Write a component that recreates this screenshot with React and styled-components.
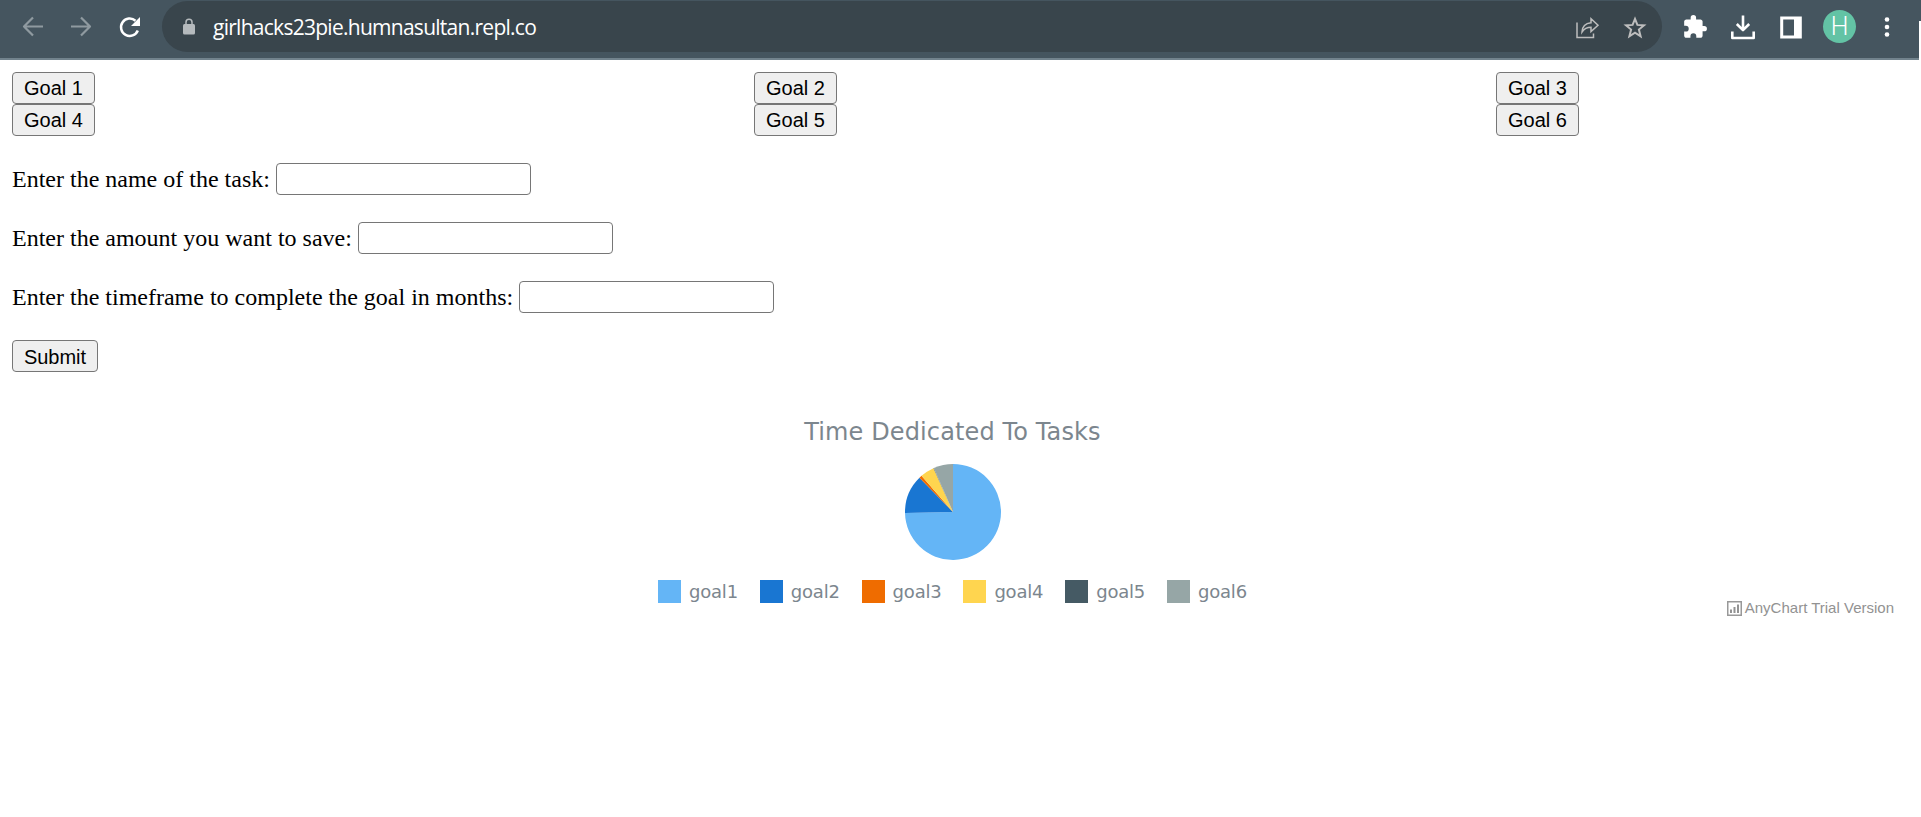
import React from 'react';
import styled, { createGlobalStyle } from 'styled-components';

const GlobalStyle = createGlobalStyle`
  *, *::before, *::after { box-sizing: border-box; }
  html, body { margin: 0; background: #fff; }
  body { overflow: hidden; font-family: "Liberation Serif", serif; color: #000; }
`;

const Page = styled.div`
  width: 1921px;
  height: 817px;
  overflow: hidden;
  background: #fff;
`;

const TopRow = styled.div`
  display: flex;
  height: 60px;
`;

const Toolbar = styled.header`
  display: flex;
  align-items: flex-start;
  width: 1919px;
  height: 60px;
  background: #45555f;
  border-bottom: 2px solid #72838d;
`;

const WindowEdge = styled.div`
  width: 2px;
  height: 21px;
  background: #45555f;
`;

const NavGroup = styled.nav`
  display: flex;
  width: 162px;
  height: 53px;
  padding-left: 20px;
  align-items: center;
  gap: 22px;
`;

const IconButton = styled.button`
  display: grid;
  place-items: center;
  width: 26px;
  height: 26px;
  padding: 0;
  border: 0;
  background: none;
  color: ${({ $color }) => $color || '#fff'};
  svg { display: block; }
`;

const AddressBar = styled.div`
  display: flex;
  align-items: center;
  width: 1500px;
  height: 51px;
  margin-top: 1px;
  padding: 0 14px 0 21px;
  border-radius: 26px;
  background: #39454c;
`;

const Url = styled.span`
  flex: 1;
  padding-left: 18px;
  font: 21px/30px "Open Sans", sans-serif;
  letter-spacing: -0.73px;
  color: #fff;
`;

const AddressActions = styled.div`
  display: flex;
  gap: 22px;
`;

const Extensions = styled.div`
  display: flex;
  align-items: center;
  height: 53px;
  padding-left: 20px;
  gap: 22px;
`;

const Avatar = styled.span`
  display: grid;
  place-items: center;
  width: 33px;
  height: 33px;
  margin: 0 -4px 0 -3px;
  border-radius: 50%;
  background: #63c3a5;
  color: #fff;
  font: 300 25px/33px Roboto, sans-serif;
`;

const Content = styled.main`
  padding: 12px;
`;

const GoalGrid = styled.div`
  display: grid;
  grid-template-columns: repeat(3, 742px);
  justify-items: start;
`;

const Button = styled.button`
  width: ${({ $width }) => $width}px;
  height: 32px;
  padding: 0;
  border: 1px solid #767676;
  border-radius: 4px;
  background: #efefef;
  color: #000;
  font: 20px/28px "Liberation Sans", Arial, sans-serif;
`;

const SubmitButton = styled(Button)`
  padding-top: 1px;
`;

const Form = styled.form`
  display: flex;
  flex-direction: column;
  align-items: flex-start;
  gap: 27px;
  margin-top: 27px;
`;

const Field = styled.label`
  display: flex;
  align-items: center;
  height: 32px;
  gap: 6px;
  font-size: 24px;
  line-height: 32px;
  white-space: nowrap;
`;

const Input = styled.input`
  width: 255px;
  height: 32px;
  border: 1px solid #767676;
  border-radius: 4px;
  background: #fff;
`;

const Chart = styled.section`
  display: flex;
  flex-direction: column;
  align-items: center;
  width: 1881px;
  margin-top: 45px;
  font-family: "DejaVu Sans", sans-serif;
  color: #7c868e;
`;

const ChartTitle = styled.h2`
  margin: 0;
  font-size: 24px;
  font-weight: 400;
  line-height: 30px;
  letter-spacing: 0.12px;
`;

const Pie = styled.svg`
  width: 96px;
  height: 96px;
  margin-top: 17px;
`;

const Legend = styled.ul`
  display: flex;
  gap: 21.8px;
  margin: 20px 0 0;
  padding: 0;
  list-style: none;
`;

const LegendItem = styled.li`
  display: flex;
  align-items: center;
  gap: 8px;
  width: 80px;
  font-size: 18px;
  line-height: 23px;
  letter-spacing: -0.2px;
  white-space: nowrap;
`;

const Swatch = styled.span`
  flex: none;
  width: 23px;
  height: 23px;
  background: ${({ $color }) => $color};
`;

const Credit = styled.footer`
  display: flex;
  align-items: center;
  align-self: flex-end;
  gap: 3px;
  height: 18px;
  margin: -4px -1px 0 0;
  font: 15px/18px "Liberation Sans", Arial, sans-serif;
  color: #929292;
  white-space: nowrap;
`;

const SLICES = [
  { name: 'goal1', color: '#64b5f6', from: 0, to: 268.8 },
  { name: 'goal2', color: '#1976d2', from: 268.8, to: 315.7 },
  { name: 'goal3', color: '#ef6c00', from: 315.7, to: 319 },
  { name: 'goal4', color: '#ffd54f', from: 319, to: 336 },
  { name: 'goal5', color: '#455a64', from: 336, to: 336.5 },
  { name: 'goal6', color: '#96a6a6', from: 336.5, to: 360 },
];

const FIELDS = [
  'Enter the name of the task:',
  'Enter the amount you want to save:',
  'Enter the timeframe to complete the goal in months:',
];

function slicePath({ from, to }) {
  const point = (deg) => {
    const a = (deg * Math.PI) / 180;
    return `${48 + 48 * Math.sin(a)} ${48 - 48 * Math.cos(a)}`;
  };
  return `M48 48L${point(from)}A48 48 0 ${to - from > 180 ? 1 : 0} 1 ${point(to)}Z`;
}

const Arrow = ({ flip }) => (
  <svg width="26" height="26" viewBox="0 0 26 26" fill="none" stroke="currentColor" strokeWidth="2.2" strokeLinejoin="round" transform={flip ? 'scale(-1 1)' : undefined}>
    <path d="M23 12.500H4.500M13 3.500L4 12.500l9 9" />
  </svg>
);

export default function App() {
  return (
    <Page>
      <GlobalStyle />
      <TopRow>
        <Toolbar>
          <NavGroup>
            <IconButton $color="#8f9aa0" aria-label="Back"><Arrow /></IconButton>
            <IconButton $color="#8f9aa0" aria-label="Forward"><Arrow flip /></IconButton>
            <IconButton aria-label="Reload">
              <svg width="26" height="26" viewBox="0 0 26 26">
                <path d="M21.800 16.500A8.700 8.700 0 1 1 19.500 6.700" fill="none" stroke="currentColor" strokeWidth="2.500" />
                <path d="M24 3v9h-9z" fill="currentColor" />
              </svg>
            </IconButton>
          </NavGroup>
          <AddressBar>
            <svg width="12" height="17" viewBox="0 0 12 17">
              <rect x="0" y="6" width="12" height="10.500" rx="1.500" fill="#b5babd" />
              <path d="M3 7V4.200a3 3 0 0 1 6 0V7" fill="none" stroke="#b5babd" strokeWidth="1.500" />
            </svg>
            <Url>girlhacks23pie.humnasultan.repl.co</Url>
            <AddressActions>
              <IconButton $color="#bdbdbd" aria-label="Share">
                <svg width="26" height="26" viewBox="0 0 26 26" fill="none" stroke="currentColor" strokeWidth="1.500">
                  <path d="M3 8.500v15h16.500v-4M8 18c.3-6 3.200-8.800 9-9.300V4.800l7 6.400-7 6.300v-4.200c-4 0-6.800 1.400-9 4.700z" />
                </svg>
              </IconButton>
              <IconButton $color="#bdbdbd" aria-label="Bookmark">
                <svg width="26" height="26" viewBox="0 0 26 26" fill="none" stroke="currentColor" strokeWidth="2">
                  <path d="M13 4.900l2.400 6 6.600.5-5.100 4.200 1.700 6.700-5.600-3.600-5.600 3.600 1.700-6.700L4 11.400l6.600-.5z" />
                </svg>
              </IconButton>
            </AddressActions>
          </AddressBar>
          <Extensions>
            <IconButton aria-label="Extensions">
              <svg width="26" height="26" viewBox="0 0 24 24" fill="currentColor">
                <path d="M20.500 11H19V7c0-1.100-.9-2-2-2h-4V3.500a2.500 2.500 0 0 0-5 0V5H4c-1.100 0-2 .9-2 2v3.800h1.500a2.700 2.700 0 0 1 0 5.400H2V20c0 1.100.9 2 2 2h3.800v-1.500a2.700 2.700 0 0 1 5.400 0V22H17c1.100 0 2-.9 2-2v-4h1.500a2.500 2.500 0 0 0 0-5z" />
              </svg>
            </IconButton>
            <IconButton aria-label="Downloads">
              <svg width="26" height="26" viewBox="0 0 26 26" fill="none" stroke="currentColor" strokeWidth="2.600" strokeLinejoin="round">
                <path d="M13 1.500v15M6.800 10l6.200 6.200 6.200-6.200M2.300 17.500V24h21.400v-6.500" />
              </svg>
            </IconButton>
            <IconButton aria-label="Side panel">
              <svg width="26" height="26" viewBox="0 0 26 26">
                <path d="M2.200 2.500h21.600v22H2.200zM5.200 5.500v16H16v-16z" fill="currentColor" fillRule="evenodd" />
              </svg>
            </IconButton>
            <Avatar>H</Avatar>
            <IconButton aria-label="Menu">
              <svg width="26" height="26" viewBox="0 0 26 26" fill="currentColor">
                <circle cx="13" cy="5.500" r="2.300" /><circle cx="13" cy="13" r="2.300" /><circle cx="13" cy="20.500" r="2.300" />
              </svg>
            </IconButton>
          </Extensions>
        </Toolbar>
        <WindowEdge />
      </TopRow>
      <Content>
        <GoalGrid>
          {[1, 2, 3, 4, 5, 6].map((n) => <Button key={n} type="button" $width={83}>Goal {n}</Button>)}
        </GoalGrid>
        <Form>
          {FIELDS.map((label) => <Field key={label}>{label}<Input /></Field>)}
          <SubmitButton type="button" $width={86}>Submit</SubmitButton>
        </Form>
        <Chart>
          <ChartTitle>Time Dedicated To Tasks</ChartTitle>
          <Pie viewBox="0 0 96 96">
            {SLICES.map((s) => <path key={s.name} d={slicePath(s)} fill={s.color} />)}
          </Pie>
          <Legend>
            {SLICES.map((s) => <LegendItem key={s.name}><Swatch $color={s.color} />{s.name}</LegendItem>)}
          </Legend>
          <Credit>
            <svg width="15" height="15" viewBox="0 0 15 15">
              <rect x=".75" y=".75" width="13.500" height="13.500" fill="none" stroke="#999" strokeWidth="1.500" />
              <path d="M3 8.500h2V12H3zM6.500 6h2v6h-2zM10 3.500h2V12h-2z" fill="#929292" />
            </svg>
            AnyChart Trial Version
          </Credit>
        </Chart>
      </Content>
    </Page>
  );
}
